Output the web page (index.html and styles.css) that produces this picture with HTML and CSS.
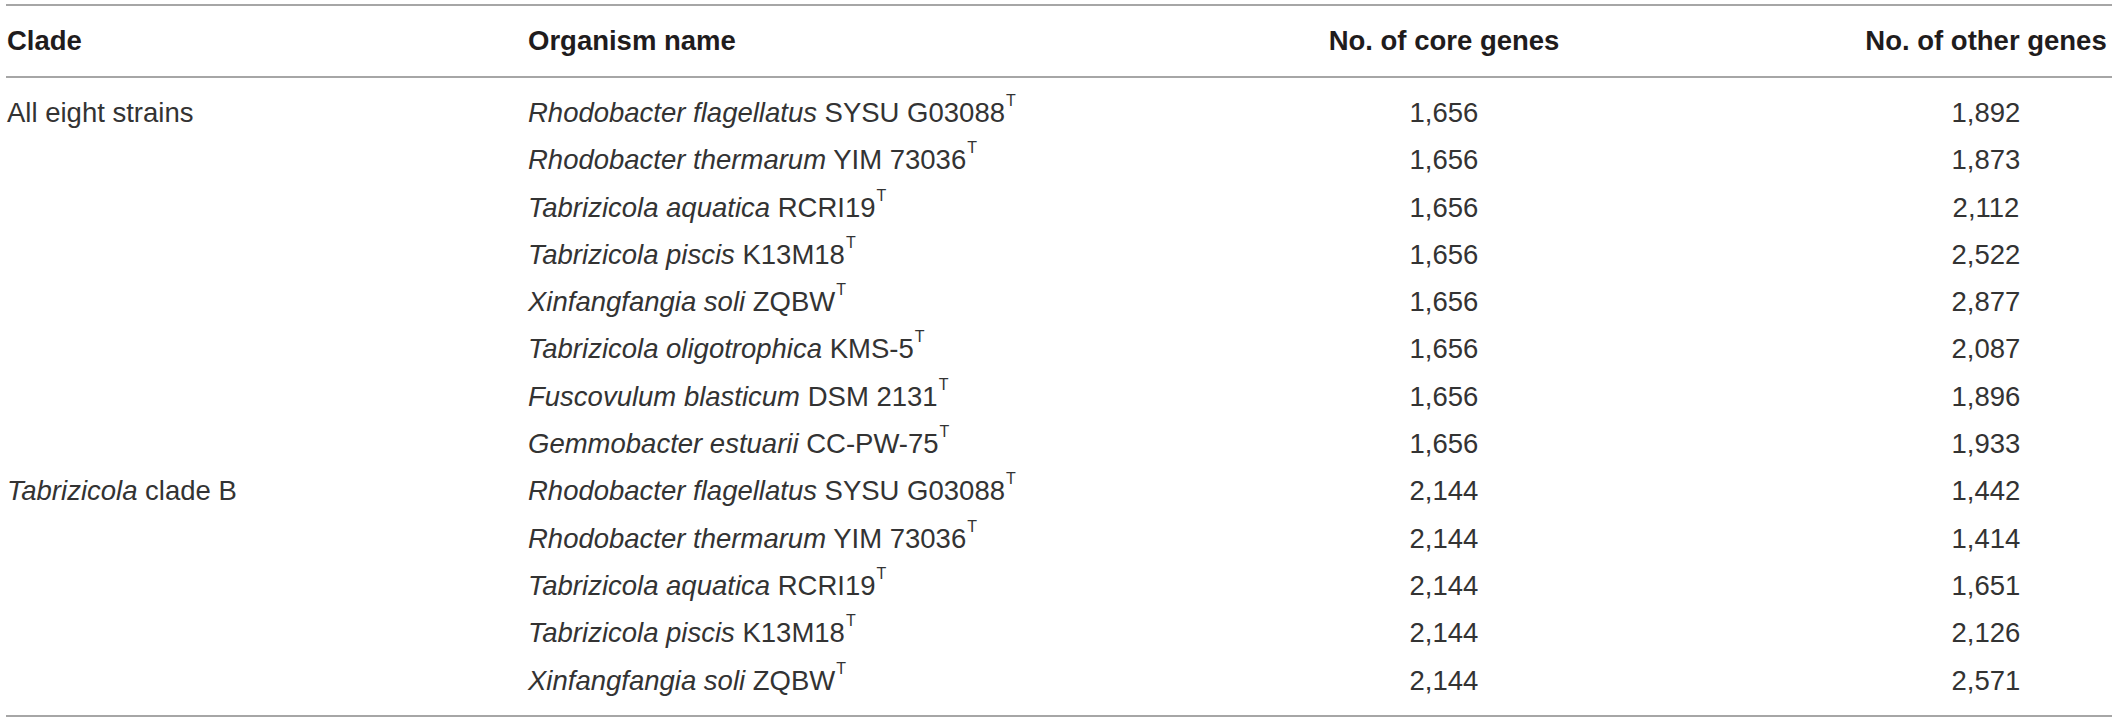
FILE: index.html
```html
<!DOCTYPE html>
<html lang="en">
<head>
<meta charset="utf-8">
<title>Core genes table</title>
<link rel="stylesheet" href="styles.css">
</head>
<body>
<table class="genes">
  <colgroup>
    <col class="c-clade">
    <col class="c-org">
    <col class="c-core">
    <col class="c-other">
  </colgroup>
  <thead>
    <tr>
      <th class="left">Clade</th>
      <th class="left">Organism name</th>
      <th class="mid">No. of core genes</th>
      <th class="mid">No. of other genes</th>
    </tr>
  </thead>
  <tbody>
    <tr class="first">
      <td class="left">All eight strains</td>
      <td class="left"><i>Rhodobacter flagellatus</i> SYSU G03088<sup>T</sup></td>
      <td class="mid">1,656</td>
      <td class="mid">1,892</td>
    </tr>
    <tr>
      <td class="left"></td>
      <td class="left"><i>Rhodobacter thermarum</i> YIM 73036<sup>T</sup></td>
      <td class="mid">1,656</td>
      <td class="mid">1,873</td>
    </tr>
    <tr>
      <td class="left"></td>
      <td class="left"><i>Tabrizicola aquatica</i> RCRI19<sup>T</sup></td>
      <td class="mid">1,656</td>
      <td class="mid">2,112</td>
    </tr>
    <tr>
      <td class="left"></td>
      <td class="left"><i>Tabrizicola piscis</i> K13M18<sup>T</sup></td>
      <td class="mid">1,656</td>
      <td class="mid">2,522</td>
    </tr>
    <tr>
      <td class="left"></td>
      <td class="left"><i>Xinfangfangia soli</i> ZQBW<sup>T</sup></td>
      <td class="mid">1,656</td>
      <td class="mid">2,877</td>
    </tr>
    <tr>
      <td class="left"></td>
      <td class="left"><i>Tabrizicola oligotrophica</i> KMS-5<sup>T</sup></td>
      <td class="mid">1,656</td>
      <td class="mid">2,087</td>
    </tr>
    <tr>
      <td class="left"></td>
      <td class="left"><i>Fuscovulum blasticum</i> DSM 2131<sup>T</sup></td>
      <td class="mid">1,656</td>
      <td class="mid">1,896</td>
    </tr>
    <tr>
      <td class="left"></td>
      <td class="left"><i>Gemmobacter estuarii</i> CC-PW-75<sup>T</sup></td>
      <td class="mid">1,656</td>
      <td class="mid">1,933</td>
    </tr>
    <tr>
      <td class="left"><i>Tabrizicola</i> clade B</td>
      <td class="left"><i>Rhodobacter flagellatus</i> SYSU G03088<sup>T</sup></td>
      <td class="mid">2,144</td>
      <td class="mid">1,442</td>
    </tr>
    <tr>
      <td class="left"></td>
      <td class="left"><i>Rhodobacter thermarum</i> YIM 73036<sup>T</sup></td>
      <td class="mid">2,144</td>
      <td class="mid">1,414</td>
    </tr>
    <tr>
      <td class="left"></td>
      <td class="left"><i>Tabrizicola aquatica</i> RCRI19<sup>T</sup></td>
      <td class="mid">2,144</td>
      <td class="mid">1,651</td>
    </tr>
    <tr>
      <td class="left"></td>
      <td class="left"><i>Tabrizicola piscis</i> K13M18<sup>T</sup></td>
      <td class="mid">2,144</td>
      <td class="mid">2,126</td>
    </tr>
    <tr class="last">
      <td class="left"></td>
      <td class="left"><i>Xinfangfangia soli</i> ZQBW<sup>T</sup></td>
      <td class="mid">2,144</td>
      <td class="mid">2,571</td>
    </tr>
  </tbody>
</table>
</body>
</html>
```

FILE: styles.css
```css
html, body {
  margin: 0;
  padding: 0;
  background: #ffffff;
}

body {
  padding: 4px 6px 0 6px;
  font-family: "Liberation Sans", Arial, sans-serif;
  color: #333333;
}

.genes {
  width: 2106px;
  table-layout: fixed;
  border-collapse: collapse;
  border-top: 2px solid #a6a6a6;
  border-bottom: 2px solid #a6a6a6;
}

.c-clade { width: 521px; }
.c-org { width: 501px; }
.c-core { width: 832px; }
.c-other { width: 252px; }

.genes th {
  font-size: 27.5px;
  font-weight: bold;
  line-height: 32px;
  padding: 19px 0 19px 0;
  color: #1f1c1d;
  border-bottom: 2px solid #a6a6a6;
  white-space: nowrap;
}

.genes td {
  font-size: 27.5px;
  font-weight: normal;
  line-height: 47.3px;
  padding: 0;
  white-space: nowrap;
  vertical-align: top;
}

.genes .left {
  text-align: left;
  padding-left: 1px;
}

.genes .mid {
  text-align: center;
}

.genes tr.first td {
  padding-top: 11px;
}

.genes tr.last td {
  padding-bottom: 11px;
}

.genes sup {
  font-size: 16px;
  line-height: 0;
  vertical-align: 16px;
  margin-left: 1px;
}
```
